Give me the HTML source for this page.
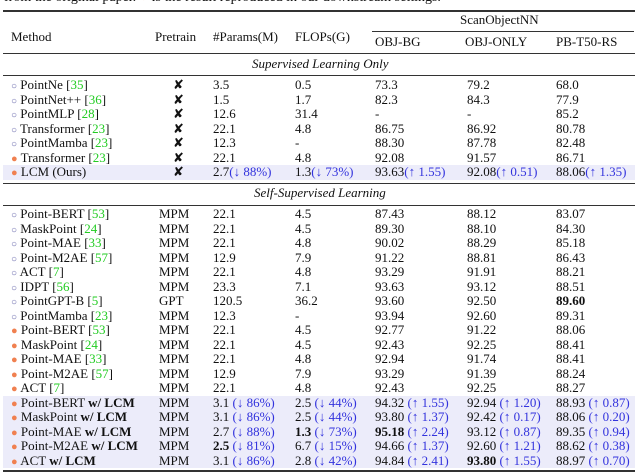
<html><head><style>
body{margin:0;width:640px;height:475px;background:#fff;position:relative;overflow:hidden;font-family:"Liberation Serif",serif;font-size:13px;color:#111}
.a{position:absolute;white-space:nowrap;line-height:14px}
.r{position:absolute;left:3px;width:632px;height:14.5px}
.r>span{position:absolute;top:0;line-height:14.5px;white-space:nowrap}
.hl{background:#ececfa}
.line{position:absolute;background:#333}
.b{color:#3333dd}.g{color:#22cc22}
.o{color:#6666aa;font-size:10px;font-style:normal}.d{color:#f08050;font-size:11px;font-style:normal}
</style></head><body>
<div class="a" style="top:-9px;left:4px;font-size:14px">from the original paper. <span style="color:#f08050">●</span> is the result reproduced in our downstream settings.</div>
<div class="line" style="top:10px;left:3px;width:632px;height:2px"></div>
<div class="a" style="top:13px;left:460px">ScanObjectNN</div>
<div class="line" style="top:31px;left:372px;width:262px;height:1px"></div>
<div class="a" style="top:30px;left:11px">Method</div>
<div class="a" style="top:30px;left:155px">Pretrain</div>
<div class="a" style="top:30px;left:213px">#Params(M)</div>
<div class="a" style="top:30px;left:295px">FLOPs(G)</div>
<div class="a" style="top:35px;left:375px">OBJ-BG</div>
<div class="a" style="top:35px;left:465px">OBJ-ONLY</div>
<div class="a" style="top:35px;left:556px">PB-T50-RS</div>
<div class="line" style="top:53px;left:3px;width:632px;height:1px"></div>
<div class="a" style="top:57px;left:252px;font-style:italic">Supervised Learning Only</div>
<div class="line" style="top:75px;left:3px;width:632px;height:1px"></div>
<div class="line" style="top:183px;left:3px;width:632px;height:1px"></div>
<div class="a" style="top:186px;left:254px;font-style:italic">Self-Supervised Learning</div>
<div class="line" style="top:205px;left:3px;width:632px;height:1px"></div>
<div class="line" style="top:470px;left:3px;width:632px;height:2px"></div>
<div class="r" style="top:78px"><span style="left:8px"><i class="o">○</i> PointNe [<span class="g">35</span>]</span><span style="left:170px">✘</span><span style="left:210px">3.5</span><span style="left:292px">0.5</span><span style="left:372px">73.3</span><span style="left:464px">79.2</span><span style="left:553px">68.0</span></div>
<div class="r" style="top:92.5px"><span style="left:8px"><i class="o">○</i> PointNet++ [<span class="g">36</span>]</span><span style="left:170px">✘</span><span style="left:210px">1.5</span><span style="left:292px">1.7</span><span style="left:372px">82.3</span><span style="left:464px">84.3</span><span style="left:553px">77.9</span></div>
<div class="r" style="top:107px"><span style="left:8px"><i class="o">○</i> PointMLP [<span class="g">28</span>]</span><span style="left:170px">✘</span><span style="left:210px">12.6</span><span style="left:292px">31.4</span><span style="left:372px">-</span><span style="left:464px">-</span><span style="left:553px">85.2</span></div>
<div class="r" style="top:121.5px"><span style="left:8px"><i class="o">○</i> Transformer [<span class="g">23</span>]</span><span style="left:170px">✘</span><span style="left:210px">22.1</span><span style="left:292px">4.8</span><span style="left:372px">86.75</span><span style="left:464px">86.92</span><span style="left:553px">80.78</span></div>
<div class="r" style="top:136px"><span style="left:8px"><i class="o">○</i> PointMamba [<span class="g">23</span>]</span><span style="left:170px">✘</span><span style="left:210px">12.3</span><span style="left:292px">-</span><span style="left:372px">88.30</span><span style="left:464px">87.78</span><span style="left:553px">82.48</span></div>
<div class="r" style="top:150.5px"><span style="left:8px"><i class="d">●</i> Transformer [<span class="g">23</span>]</span><span style="left:170px">✘</span><span style="left:210px">22.1</span><span style="left:292px">4.8</span><span style="left:372px">92.08</span><span style="left:464px">91.57</span><span style="left:553px">86.71</span></div>
<div class="r hl" style="top:165px"><span style="left:8px"><i class="d">●</i> LCM (Ours)</span><span style="left:170px">✘</span><span style="left:210px">2.7<span class="b">(↓ 88%)</span></span><span style="left:292px">1.3<span class="b">(↓ 73%)</span></span><span style="left:372px">93.63<span class="b">(↑ 1.55)</span></span><span style="left:464px">92.08<span class="b">(↑ 0.51)</span></span><span style="left:553px">88.06<span class="b">(↑ 1.35)</span></span></div>
<div id="ss"></div>
<script>
var rows=[
["o","Point-BERT","53","MPM","22.1","4.5","87.43","88.12","83.07"],
["o","MaskPoint","24","MPM","22.1","4.5","89.30","88.10","84.30"],
["o","Point-MAE","33","MPM","22.1","4.8","90.02","88.29","85.18"],
["o","Point-M2AE","57","MPM","12.9","7.9","91.22","88.81","86.43"],
["o","ACT","7","MPM","22.1","4.8","93.29","91.91","88.21"],
["o","IDPT","56","MPM","23.3","7.1","93.63","93.12","88.51"],
["o","PointGPT-B","5","GPT","120.5","36.2","93.60","92.50","<b>89.60</b>"],
["o","PointMamba","23","MPM","12.3","-","93.94","92.60","89.31"],
["d","Point-BERT","53","MPM","22.1","4.5","92.77","91.22","88.06"],
["d","MaskPoint","24","MPM","22.1","4.5","92.43","92.25","88.41"],
["d","Point-MAE","33","MPM","22.1","4.8","92.94","91.74","88.41"],
["d","Point-M2AE","57","MPM","12.9","7.9","93.29","91.39","88.24"],
["d","ACT","7","MPM","22.1","4.8","92.43","92.25","88.27"],
["L","Point-BERT","","MPM","3.1 <s>(↓ 86%)</s>","2.5 <s>(↓ 44%)</s>","94.32 <s>(↑ 1.55)</s>","92.94 <s>(↑ 1.20)</s>","88.93 <s>(↑ 0.87)</s>"],
["L","MaskPoint","","MPM","3.1 <s>(↓ 86%)</s>","2.5 <s>(↓ 44%)</s>","93.80 <s>(↑ 1.37)</s>","92.42 <s>(↑ 0.17)</s>","88.06 <s>(↑ 0.20)</s>"],
["L","Point-MAE","","MPM","2.7 <s>(↓ 88%)</s>","<b>1.3</b> <s>(↓ 73%)</s>","<b>95.18</b> <s>(↑ 2.24)</s>","93.12 <s>(↑ 0.87)</s>","89.35 <s>(↑ 0.94)</s>"],
["L","Point-M2AE","","MPM","<b>2.5</b> <s>(↓ 81%)</s>","6.7 <s>(↓ 15%)</s>","94.66 <s>(↑ 1.37)</s>","92.60 <s>(↑ 1.21)</s>","88.62 <s>(↑ 0.38)</s>"],
["L","ACT","","MPM","3.1 <s>(↓ 86%)</s>","2.8 <s>(↓ 42%)</s>","94.84 <s>(↑ 2.41)</s>","<b>93.80</b> <s>(↑ 1.55)</s>","88.97 <s>(↑ 0.70)</s>"]];
var h="";rows.forEach(function(r,i){var t=207+i*14.5;var L=r[0]=="L";
var m=(r[0]=="o"?'<i class="o">○</i> ':'<i class="d">●</i> ')+(L?r[1]+' <b>w/ LCM</b>':r[1]+' [<span class="g">'+r[2]+'</span>]');
var f=function(x){return x.replace(/<s>/g,'<i class="b" style="font-style:normal">').replace(/<\/s>/g,'</i>')};
h+='<div class="r'+(L?' hl':'')+'" style="top:'+t+'px"><span style="left:8px">'+m+'</span><span style="left:156px">'+r[3]+'</span><span style="left:210px">'+f(r[4])+'</span><span style="left:292px">'+f(r[5])+'</span><span style="left:372px">'+f(r[6])+'</span><span style="left:464px">'+f(r[7])+'</span><span style="left:553px">'+f(r[8])+'</span></div>';});
document.getElementById("ss").innerHTML=h;
</script>
</body></html>
